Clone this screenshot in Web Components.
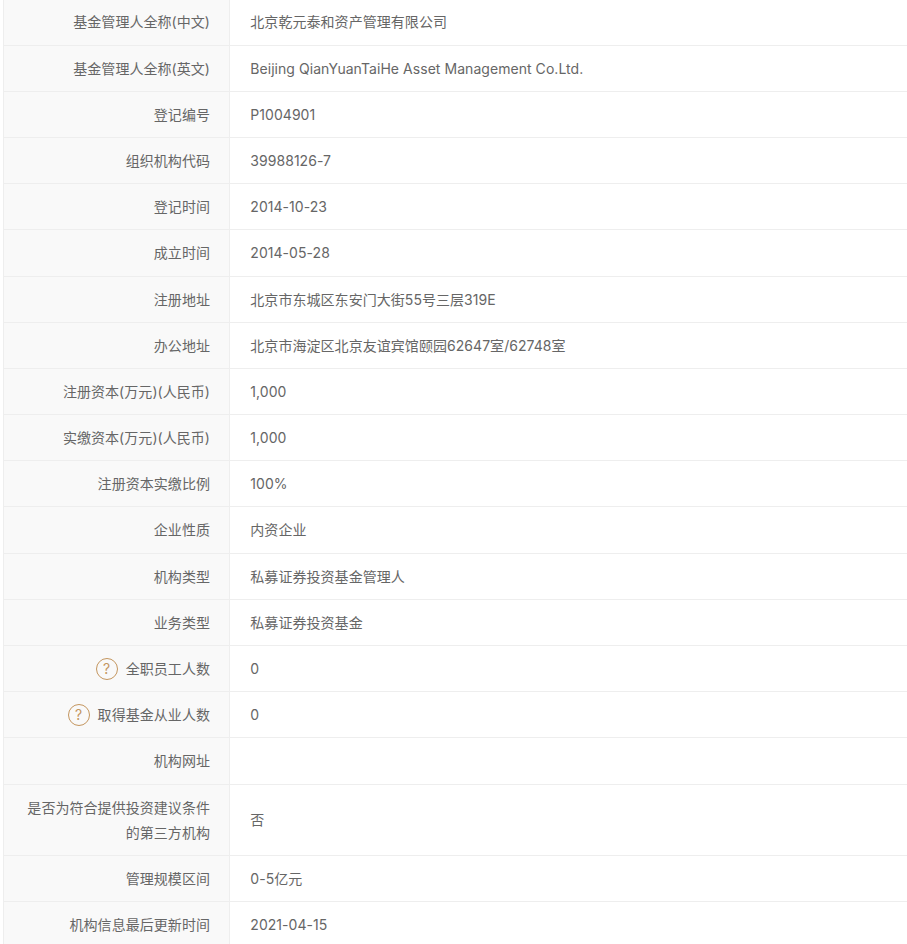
<!DOCTYPE html>
<html lang="zh">
<head>
<meta charset="utf-8">
<title>基金管理人信息</title>
<style>
  html, body { margin: 0; padding: 0; background: #fff; overflow: hidden; height: 944px; }
  body { font-family: Inter, "Noto Sans CJK SC", sans-serif; font-size: 14px; color: #666; letter-spacing: .05px; }
</style>
</head>
<body>
<template id="tpl-table">
  <style>
    :host { display: block; margin: -0.6px 0 0 3px; border-left: 1px solid #eee; }
  </style>
  <slot></slot>
</template>

<template id="tpl-row">
  <style>
    :host { display: grid; grid-template-columns: 226px 1fr; border-bottom: 1px solid #eee; line-height: 25.1875px; }
    .k { display: flex; align-items: center; justify-content: flex-end; gap: 4px; text-align: right;
         padding: 10px 19px 10px 20px; background: #f9f9f9; border-right: 1px solid #eee; }
    .v { display: flex; align-items: center; padding: 10px 20px 10px 20.3px; }
  </style>
  <div class="k"><slot name="help"></slot><span><slot name="label"></slot></span></div>
  <div class="v"><span><slot></slot></span></div>
</template>

<template id="tpl-help">
  <style>
    :host { display: inline-flex; width: 22px; height: 22px; box-sizing: border-box; margin-right: 4px;
            align-items: center; justify-content: center; border: 1px solid #c4965f; border-radius: 50%;
            color: #c4965f; font-size: 14px; line-height: 1; }
  </style>
  ?
</template>

<info-table>
  <info-row><span slot="label">基金管理人全称(中文)</span>北京乾元泰和资产管理有限公司</info-row>
  <info-row><span slot="label">基金管理人全称(英文)</span>Beijing QianYuanTaiHe Asset Management Co.Ltd.</info-row>
  <info-row><span slot="label">登记编号</span>P1004901</info-row>
  <info-row><span slot="label">组织机构代码</span>39988126-7</info-row>
  <info-row><span slot="label">登记时间</span>2014-10-23</info-row>
  <info-row><span slot="label">成立时间</span>2014-05-28</info-row>
  <info-row><span slot="label">注册地址</span>北京市东城区东安门大街55号三层319E</info-row>
  <info-row><span slot="label">办公地址</span>北京市海淀区北京友谊宾馆颐园62647室/62748室</info-row>
  <info-row><span slot="label">注册资本(万元)(人民币)</span>1,000</info-row>
  <info-row><span slot="label">实缴资本(万元)(人民币)</span>1,000</info-row>
  <info-row><span slot="label">注册资本实缴比例</span>100%</info-row>
  <info-row><span slot="label">企业性质</span>内资企业</info-row>
  <info-row><span slot="label">机构类型</span>私募证券投资基金管理人</info-row>
  <info-row><span slot="label">业务类型</span>私募证券投资基金</info-row>
  <info-row><help-mark slot="help"></help-mark><span slot="label">全职员工人数</span>0</info-row>
  <info-row><help-mark slot="help"></help-mark><span slot="label">取得基金从业人数</span>0</info-row>
  <info-row><span slot="label">机构网址</span></info-row>
  <info-row><span slot="label">是否为符合提供投资建议条件的第三方机构</span>否</info-row>
  <info-row><span slot="label">管理规模区间</span>0-5亿元</info-row>
  <info-row><span slot="label">机构信息最后更新时间</span>2021-04-15</info-row>
</info-table>

<script>
'use strict';

// all three are just a template cloned into an open shadow root
function defineFromTemplate(tag, tplId) {
    customElements.define(tag, class extends HTMLElement {
        constructor() {
            super();
            this.attachShadow({ mode: 'open' })
                .appendChild(document.getElementById(tplId).content.cloneNode(true));
        }
    });
}

defineFromTemplate('info-table', 'tpl-table');
defineFromTemplate('info-row', 'tpl-row');
defineFromTemplate('help-mark', 'tpl-help');
</script>
</body>
</html>
